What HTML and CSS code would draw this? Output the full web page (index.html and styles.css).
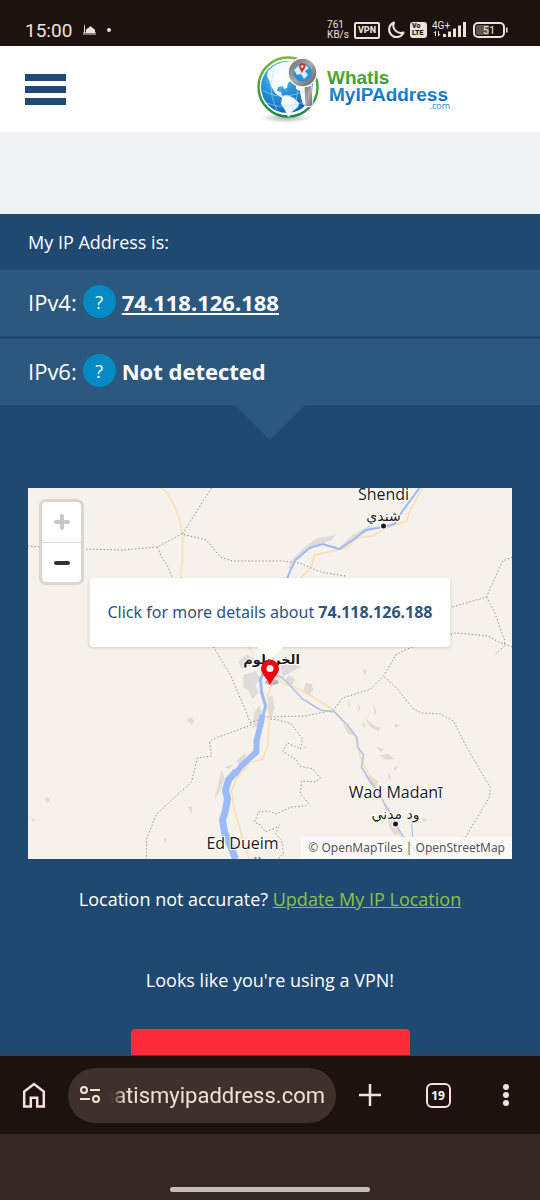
FILE: index.html
```
<!DOCTYPE html>
<html lang="en">

<head>
    <meta charset="UTF-8">
    <meta name="viewport" content="width=device-width, initial-scale=1.0">
    <title>What Is My IP Address</title>
    <link rel="stylesheet" href="styles.css">
</head>

<body>
    <!-- Phone status bar -->
    <div class="status-bar">
        <span class="clock">15:00</span>
        <svg class="mosque" width="13" height="13" viewBox="0 0 13 13" fill="#efe2db">
            <path d="M1 2.5 1.5 0 2 2.5V9H1zM3 9V6.5C3 4.500 5.500 4.500 7.500 2 9.500 4.500 12 4.500 12 6.500V9z" />
            <path d="M0 8h13v3H0z" opacity=".5" />
        </svg>
        <span class="dot"></span>
        <div class="status-icons">
            <span class="speed">761<br>KB/s</span>
            <span class="vpn">VPN</span>
            <svg class="moon" width="18" height="18" viewBox="0 0 18 18" fill="none" stroke="#efe2db" stroke-width="2" stroke-linejoin="round">
                <path d="M7 1.5A7.500 7.500 0 1 0 16.500 11.500 7.500 7.500 0 0 1 7 1.500z" />
            </svg>
            <span class="volte">Vo<br>LTE</span>
            <svg width="36" height="18" viewBox="0 0 36 18" fill="#efe2db">
                <text class="net" x="0" y="8">4G+</text>
                <path d="M3 15V12H1.500L4 9.500V15zM6 10h1v3h1.500L6 15.500zM11 13h3v3h-3zM16 10.500h3V16h-3zM21 7.500h3V16h-3zM26 4.500h3V16h-3zM31 1h3v15h-3z" />
            </svg>
            <svg width="36" height="16" viewBox="0 0 36 16">
                <rect x="1" y="1" width="30" height="14" rx="4" fill="none" stroke="#efe2db" stroke-width="2" />
                <path d="M5 3h11v10H5a2 2 0 0 1-2-2V5a2 2 0 0 1 2-2z" fill="#61554f" />
                <path d="M33 5.500h1.500v5H33z" fill="#efe2db" />
                <text class="battery" x="16" y="12" text-anchor="middle">51</text>
            </svg>
        </div>
    </div>

    <header class="header">
        <button type="button" class="menu-btn" aria-label="Menu">
            <span></span>
            <span></span>
            <span></span>
        </button>
        <a href="#" class="logo">
            <svg width="195" height="70" viewBox="256 54 195 70">
                <defs>
                    <radialGradient id="globe" cx=".35" cy=".3" r=".8">
                        <stop offset="0" stop-color="#8fd0f5" />
                        <stop offset=".4" stop-color="#2a96dc" />
                        <stop offset="1" stop-color="#0a5fae" />
                    </radialGradient>
                    <linearGradient id="ring" x1="0" y1="0" x2="0" y2="1">
                        <stop offset="0" stop-color="#79b83a" />
                        <stop offset="1" stop-color="#178a43" />
                    </linearGradient>
                    <linearGradient id="metal" x1="0" y1="0" x2="1" y2="1">
                        <stop offset="0" stop-color="#777" />
                        <stop offset=".5" stop-color="#aaa" />
                        <stop offset="1" stop-color="#666" />
                    </linearGradient>
                    <linearGradient id="greenText" x1="0" y1="0" x2="0" y2="1">
                        <stop offset="0" stop-color="#6bb43a" />
                        <stop offset="1" stop-color="#25913d" />
                    </linearGradient>
                    <linearGradient id="blueText" x1="0" y1="0" x2="0" y2="1">
                        <stop offset="0" stop-color="#25a0e0" />
                        <stop offset="1" stop-color="#0561ae" />
                    </linearGradient>
                    <radialGradient id="shade">
                        <stop offset="0" stop-color="#000" stop-opacity=".3" />
                        <stop offset="1" stop-color="#000" stop-opacity="0" />
                    </radialGradient>
                </defs>
                <ellipse cx="286" cy="118" rx="26" ry="5" fill="url(#shade)" />
                <circle cx="288" cy="87" r="29.500" fill="#fff" stroke="url(#ring)" stroke-width="2.500" />
                <circle cx="287" cy="87" r="26" fill="url(#globe)" />
                <!-- Land -->
                <path d="M268 71l7-6 8-3 9-1 3 3-5 2 2 3-1 4 5-1 3 4-6 3-5 4-1 5-3 1-1-3-5 1-1 4 4 1 1 4 5-1 7 3 5 5-1 4-5 4-3 5-2 1-3-7-4-6 1-6-7-5-4-7-2-6-2-4z" fill="#fff" opacity=".95" />
                <path d="M296 81l7-3 7 4 2 8-2 4-3 1 1 6-5 4-2-8-1-6-4-2z" fill="#fff" />
                <path d="M263 91q22 12 47-3M267 103q18 8 39-2M277 63q-12 24 0 47M291 61q14 27 0 52" fill="none" stroke="#a8dcf8" stroke-width=".7" opacity=".8" />
                <!-- Magnifier -->
                <path d="M304 87l8-2 1 21-8 1z" fill="url(#metal)" stroke="#fff" stroke-width="1" />
                <circle cx="302.500" cy="72.500" r="12" fill="#278fd5" stroke="#fff" stroke-width="6" />
                <circle cx="302.500" cy="72.500" r="11.500" fill="#2a91d8" stroke="url(#metal)" stroke-width="4.500" />
                <path d="M294 70l5-5 5-1 5 4-4 3 3 4-4 4-3-5-4 1z" fill="#d5effb" />
                <path d="M302 73c-2-4-3-5-3-6.500a3 3 0 0 1 6.500 0c0 1.500-1.500 2.500-3.500 6.500z" fill="#d9302c" />
                <circle cx="302.200" cy="66.500" r="1.200" fill="#fff" />
                <text class="logo-text" x="327" y="84" fill="url(#greenText)">WhatIs</text>
                <text class="logo-text" x="329" y="101" fill="url(#blueText)">MyIPAddress</text>
                <text class="logo-com" x="450" y="109" text-anchor="end" fill="#1b87cb">.com</text>
            </svg>
        </a>
    </header>

    <div class="ad-space"></div>

    <main>
        <p class="ip-title">My IP Address is:</p>
        <div class="ip-row">
            <span>IPv4:</span>
            <button type="button" class="help-btn" aria-label="About IPv4">?</button>
            <a href="#" class="ip-value">74.118.126.188</a>
        </div>
        <div class="ip-row">
            <span>IPv6:</span>
            <button type="button" class="help-btn" aria-label="About IPv6">?</button>
            <span class="ip-value">Not detected</span>
        </div>
        <div class="arrow-down"></div>

        <div class="map">
            <svg class="map-tiles" viewBox="27 488 485 371" preserveAspectRatio="xMidYMid slice">
                <rect x="27" y="488" width="485" height="371" fill="#f6f1eb" />
                <!-- Built-up areas -->
                <g fill="#dcd8d5" opacity=".85">
                    <path d="M186 720l4-3 4 4-3 4zM44 799l3-2 3 3-3 3zM30 818l5 1-2 3zM187 806l5 1-1 7zM163 838l3 1-1 4z" />
                    <path d="M288 568l5-10 12-12 12-8 18-3-4 5-14 5-14 8-9 9-2 8zM338 548l14-13 16-9 5 3-18 9-14 12z" />
                    <path d="M238 662l8-8 8 5-4 6-8 5zM243 675l12-4 5 8-5 6 3 8-6 6-4-9-5-3zM280 664l14 1 8 2-10 4-10 6zM305 683l6 1 2 6-5 5-5-5zM288 675l7 4-4 7-7-5z" />
                    <path d="M254 712l5-6 4 8-2 10-9 4zM268 697l4-2 2 14-4 9-3-7zM236 761l8-8 2 3-7 9zM221 770l3 8-4 12-6 10 3-14zM224 767l9-3-4 5z" />
                    <path d="M342 720l7 7 5 9-6-2-5-8zM361 720l4 5-2 3zM373 704l3 8-2 4zM358 703l2 6-3 4zM348 699l2 5-2 4zM376 747l7 2-3 3zM364 718l10 8 6 1-2 4-8-4zM394 723l5 3-4 2z" />
                    <path d="M364 775l7 2 7 4-4 8-5-6zM378 755l10-1 6 5-9 1zM393 768l6-3-5 6zM388 773l3 5-3 2zM362 668l4 3-2 4z" />
                    <path d="M387 817l9 5 4 10-6 4-5-8zM420 818l7 1-3 3zM302 746l5 1-4 2z" />
                </g>
                <!-- Roads -->
                <g fill="none" stroke="#f8dfaf" stroke-width="1.500" stroke-linejoin="round">
                    <path d="M160 488l6 4 8 14 5 13 3 15v28l-2 12 5 20" />
                    <path d="M422 488l-13 24-3 9-18 6-16 9-16 2-10 10-18 4-14 3-3 12-10 10-20 21-8 20 3 12-8 18" />
                    <path d="M243 640l10 14M271 684l-4 12 2 25-2 26-5 12-13 4-13 16-5 12 2 15 10 36 8 24" />
                    <path d="M271 670l12 14 11 3 17 9 22 14 14 17 10 11 2 17 8 17 11 15 6 18 11 21 8 17 5 15 5 12" />
                </g>
                <!-- Borders -->
                <g fill="none" stroke="#96928f" stroke-width="1" stroke-dasharray="1.500 2">
                    <path d="M27 546l14 1M82 549l40 1 35-3 24-13 25 6 14 17 12 4h50l17 2 21 9 25 4M211 488l-29 46M157 547l4 10 6 9 8 20 6 20 32 41 17 28 21 50-36 13-6 4 2 14-14 2-6 24-35 32-10 25v22" />
                    <path d="M250 723l15-6 40-1 28-6 9-12 28-9 13-13 13-22 22-10 37-11 33 3 10 6 23 8M384 677l12 11 17 21 8 4 19 1 13 7 13 26 24 41-1 9-31 52" />
                    <path d="M452 607l34-10 16-36 10-4M486 597l8 15 10 28v6l-9 8M270 719l8 1 13 4 11 15-2 10-13-6-5 8 14 9 3 6 13 3 8 9-5 4-14-1-1 13 8 9-3 3-15 1-14 7-8-3-10 1-4 10 6 3 5 7 10-4 4-3-4 9 6 6 2 13-8 9-8-1" />
                </g>
                <!-- Nile -->
                <g fill="none" stroke="#9dbaf8" stroke-linejoin="round">
                    <path d="M419 488l-17 23-8 13-11 3-18 3-11 9-15 10-17-5-13 4-14 12-5 10-5 13-4 26-3 25-5 10" stroke-width="2" />
                    <path d="M271 674l10 3 10 10 11 12 18 11 14 2 13 13 9 12 1 10 6 8-2 12 9 15 8 10 6 12 6 9 6 13 7 11 7 8 9 11" stroke="#b0c2ec" stroke-width="1.500" />
                    <path d="M411 821l1 15 9 10 10 9" stroke-width="1" />
                    <path d="M265 669l-5 10 1 13 4 14-3 12" stroke-width="3" />
                    <path d="M262 715l-2 10-4 16v11l-8 7-8 8-6 8" stroke-width="6" />
                    <path d="M236 771l-8 9-3 10 2 9-2 11-3 10 2 12 6 14 5 13" stroke-width="7" />
                </g>
                <!-- Places -->
                <g class="place" text-anchor="middle">
                    <circle cx="383" cy="526" r="2.500" />
                    <circle cx="395" cy="824" r="2.500" />
                    <text x="383" y="500">Shendi</text>
                    <text class="place-ar" x="383" y="521">شندي</text>
                    <text class="place-ar capital" x="271" y="664">الخرطوم</text>
                    <text x="395" y="798">Wad Madanī</text>
                    <text class="place-ar" x="395" y="819">ود مدني</text>
                    <text x="242" y="849">Ed Dueim</text>
                </g>
                <path d="M254 858h2M258 858h2" stroke="#222" />
            </svg>
            <div class="zoom-control">
                <button type="button" aria-label="Zoom in" disabled>
                    <svg width="16" height="16" viewBox="0 0 16 16"><path d="M2 8h12M8 2v12" /></svg>
                </button>
                <button type="button" aria-label="Zoom out">
                    <svg width="16" height="16" viewBox="0 0 16 16"><path d="M2 8h12" /></svg>
                </button>
            </div>
            <a href="#" class="popup">Click for more details about <b>74.118.126.188</b></a>
            <svg class="marker" width="30" height="30" viewBox="0 0 30 30">
                <ellipse cx="17" cy="24" rx="7" ry="3" fill="#000" opacity=".25" />
                <path d="M15 27C12 20 6 16 6 10.500a9 9 0 0 1 18 0C24 16 18 20 15 27z" fill="#f30010" />
                <circle cx="15" cy="10.500" r="3.500" fill="#fff" />
            </svg>
            <div class="attribution">© <a href="#">OpenMapTiles</a> | <a href="#">OpenStreetMap</a></div>
        </div>

        <p class="note">Location not accurate? <a href="#">Update My IP Location</a></p>
        <p class="vpn-note">Looks like you're using a VPN!</p>
        <button type="button" class="cta-btn" aria-label="Continue"></button>
    </main>

    <!-- Browser toolbar -->
    <nav class="toolbar">
        <button type="button" class="tool-btn" aria-label="Home">
            <svg width="26" height="28" viewBox="0 0 26 28" fill="none" stroke="#f3e2da" stroke-width="2.500">
                <path d="M3.200 25.500V10.500L13 3l9.800 7.500v15h-6.600v-8.700H9.800v8.700z" />
            </svg>
        </button>
        <div class="address">
            <svg width="22" height="18" viewBox="0 0 22 18" fill="none" stroke="#f3e2da" stroke-width="2">
                <circle cx="5" cy="4" r="3" />
                <circle cx="17" cy="13" r="3" />
                <path d="M11 4h10M1 13h10" />
            </svg>
            <input type="text" class="url" aria-label="Address" value="whatismyipaddress.com">
        </div>
        <button type="button" class="tool-btn" aria-label="New tab">
            <svg width="24" height="24" viewBox="0 0 24 24" fill="none" stroke="#f3e2da" stroke-width="2.500">
                <path d="M1 12h22M12 1v22" />
            </svg>
        </button>
        <button type="button" class="tool-btn" aria-label="Tabs"><span class="tab-count">19</span></button>
        <button type="button" class="tool-btn" aria-label="More">
            <svg width="6" height="24" viewBox="0 0 6 24" fill="#f3e2da">
                <circle cx="3" cy="4" r="3" />
                <circle cx="3" cy="12" r="3" />
                <circle cx="3" cy="20" r="3" />
            </svg>
        </button>
    </nav>
    <div class="gesture-bar"><span></span></div>
</body>

</html>
```
FILE: styles.css
```
* {
    box-sizing: border-box;
}

body {
    display: flex;
    flex-direction: column;
    height: 100vh;
    margin: 0;
    background-color: #1d120d;
    color: #ffffff;
    font-family: "Open Sans", "Noto Sans", sans-serif;
    font-size: 18px;
}

button {
    padding: 0;
    border: none;
    background: none;
    color: inherit;
    font-family: inherit;
    cursor: pointer;
}

svg {
    display: block;
}

p {
    margin: 0;
}

/* Status bar */
.status-bar {
    display: flex;
    align-items: center;
    flex-shrink: 0;
    height: 46px;
    padding: 14px 31px 0 25px;
    color: #efe2db;
    font-family: Roboto, sans-serif;
}

.clock {
    font-size: 19px;
}

.mosque {
    margin-left: 11px;
}

.dot {
    width: 4px;
    height: 4px;
    margin-left: 11px;
    border-radius: 50%;
    background-color: #efe2db;
}

.status-icons {
    display: flex;
    align-items: center;
    gap: 5px;
    margin-left: auto;
}

.speed {
    font-size: 10px;
    line-height: 10px;
}

.vpn {
    padding: 0 2px;
    border: 2px solid #efe2db;
    border-radius: 2px;
    font-size: 9px;
    font-weight: 800;
    line-height: 13px;
}

.moon {
    margin-left: 2px;
}

.volte {
    width: 17px;
    padding: 1px 2px;
    border-radius: 3px;
    background-color: #efe2db;
    color: #1d120d;
    font-size: 7px;
    font-weight: 900;
    line-height: 7px;
}

.net {
    font-size: 10px;
}

.battery {
    fill: #efe2db;
    font-size: 11px;
}

/* Header */
.header {
    display: flex;
    justify-content: space-between;
    align-items: center;
    flex-shrink: 0;
    height: 86px;
    padding: 0 89px 0 25px;
    background-color: #ffffff;
}

.menu-btn {
    display: flex;
    flex-direction: column;
    gap: 5px;
    width: 41px;
}

.menu-btn span {
    height: 7px;
    background-color: #1f4a74;
}

.logo-text {
    font-family: "Liberation Sans", Arial, sans-serif;
    font-size: 19px;
    font-weight: bold;
}

.logo-com {
    font-family: "Open Sans", sans-serif;
    font-size: 9px;
}

.ad-space {
    flex-shrink: 0;
    height: 82px;
    background-color: #f1f2f4;
}

/* IP address section */
main {
    flex: 1;
    min-height: 0;
    overflow: hidden;
    background-color: #1f4971;
}

.ip-title {
    padding: 1px 28px 0;
    font-size: 18px;
    line-height: 55px;
}

.ip-row {
    display: flex;
    align-items: center;
    gap: 6px;
    height: 66px;
    margin-bottom: 3px;
    padding: 0 28px 3px;
    background-color: #2c587f;
    font-size: 22px;
}

.help-btn {
    width: 33px;
    height: 33px;
    border-radius: 50%;
    background-color: #038ac3;
    font-size: 18px;
}

.ip-value {
    color: #ffffff;
    font-weight: bold;
}

.arrow-down {
    width: 70px;
    height: 35px;
    margin: -3px auto 48px;
    background-color: #2c587f;
    clip-path: polygon(0 0, 100% 0, 50% 100%);
}

/* Map */
.map {
    position: relative;
    height: 371px;
    margin: 0 28px;
    overflow: hidden;
}

.map-tiles {
    width: 100%;
    height: 100%;
}

.place {
    fill: #1a1a1a;
    stroke: #ffffff;
    stroke-width: 2px;
    paint-order: stroke;
    font-size: 16px;
}

.place-ar {
    font-family: "DejaVu Sans", sans-serif;
    font-size: 14px;
}

.capital {
    font-size: 13px;
    font-weight: bold;
}

.zoom-control {
    position: absolute;
    top: 11px;
    left: 11px;
    width: 45px;
    border: 3px solid #d9d5d0;
    border-radius: 7px;
    background-color: #ffffff;
}

.zoom-control button {
    display: flex;
    justify-content: center;
    align-items: center;
    width: 100%;
    height: 39px;
    fill: none;
    stroke: #333333;
    stroke-width: 4px;
    stroke-linecap: round;
}

.zoom-control button:disabled {
    height: 41px;
    border-bottom: 1px solid #dddddd;
    stroke: #c8c8c8;
}

.popup {
    position: absolute;
    top: 90px;
    left: 50%;
    transform: translateX(-50%);
    padding: 0 18px;
    border-radius: 4px;
    background-color: #ffffff;
    box-shadow: 0 1px 3px rgba(0, 0, 0, 0.15);
    color: #2d557b;
    font-family: "Noto Sans", sans-serif;
    font-size: 16px;
    line-height: 69px;
    text-decoration: none;
    white-space: nowrap;
}

.popup::after {
    content: "";
    position: absolute;
    top: 100%;
    left: 50%;
    width: 26px;
    height: 13px;
    background-color: #ffffff;
    clip-path: polygon(0 0, 100% 0, 50% 100%);
    transform: translateX(-50%);
}

.marker {
    position: absolute;
    top: 170px;
    left: 50%;
    transform: translateX(-50%);
}

.attribution {
    position: absolute;
    right: 0;
    bottom: 0;
    padding: 0 7px;
    background-color: rgba(255, 255, 255, 0.65);
    color: #555555;
    font-family: "Noto Sans", sans-serif;
    font-size: 12px;
    line-height: 22px;
}

.attribution a {
    color: #555555;
    text-decoration: none;
}

.note,
.vpn-note {
    margin-top: 24px;
    line-height: 32px;
    text-align: center;
}

.note a {
    color: #8bc53f;
}

.vpn-note {
    margin-top: 49px;
}

.cta-btn {
    display: block;
    width: 279px;
    height: 60px;
    margin: 33px auto 0;
    border-radius: 4px;
    background-color: #ff2b3a;
}

/* Browser toolbar */
.toolbar {
    display: flex;
    align-items: center;
    flex-shrink: 0;
    height: 79px;
    border-top: 1px solid #4a3f3b;
}

.tool-btn {
    display: flex;
    justify-content: center;
    align-items: center;
    flex-shrink: 0;
    width: 68px;
    height: 48px;
}

.address {
    display: flex;
    align-items: center;
    flex: 1;
    gap: 10px;
    min-width: 0;
    height: 55px;
    padding: 0 11px;
    border-radius: 28px;
    background-color: #3e312b;
}

.address svg {
    flex-shrink: 0;
}

.url {
    flex: 1;
    min-width: 0;
    padding: 0;
    border: none;
    outline: none;
    background: none;
    color: #efe0d8;
    direction: rtl;
    font-family: Roboto, sans-serif;
    font-size: 22px;
    -webkit-mask-image: linear-gradient(90deg, transparent, #000000 14px);
    mask-image: linear-gradient(90deg, transparent, #000000 14px);
}

.tab-count {
    width: 25px;
    height: 25px;
    border: 2px solid #f3e2da;
    border-radius: 6px;
    font-size: 12px;
    font-weight: bold;
    line-height: 21px;
}

.gesture-bar {
    display: flex;
    justify-content: center;
    flex-shrink: 0;
    height: 66px;
    padding-top: 53px;
    background-color: #352723;
}

.gesture-bar span {
    width: 200px;
    height: 5px;
    border-radius: 3px;
    background-color: #c5beba;
}
```
